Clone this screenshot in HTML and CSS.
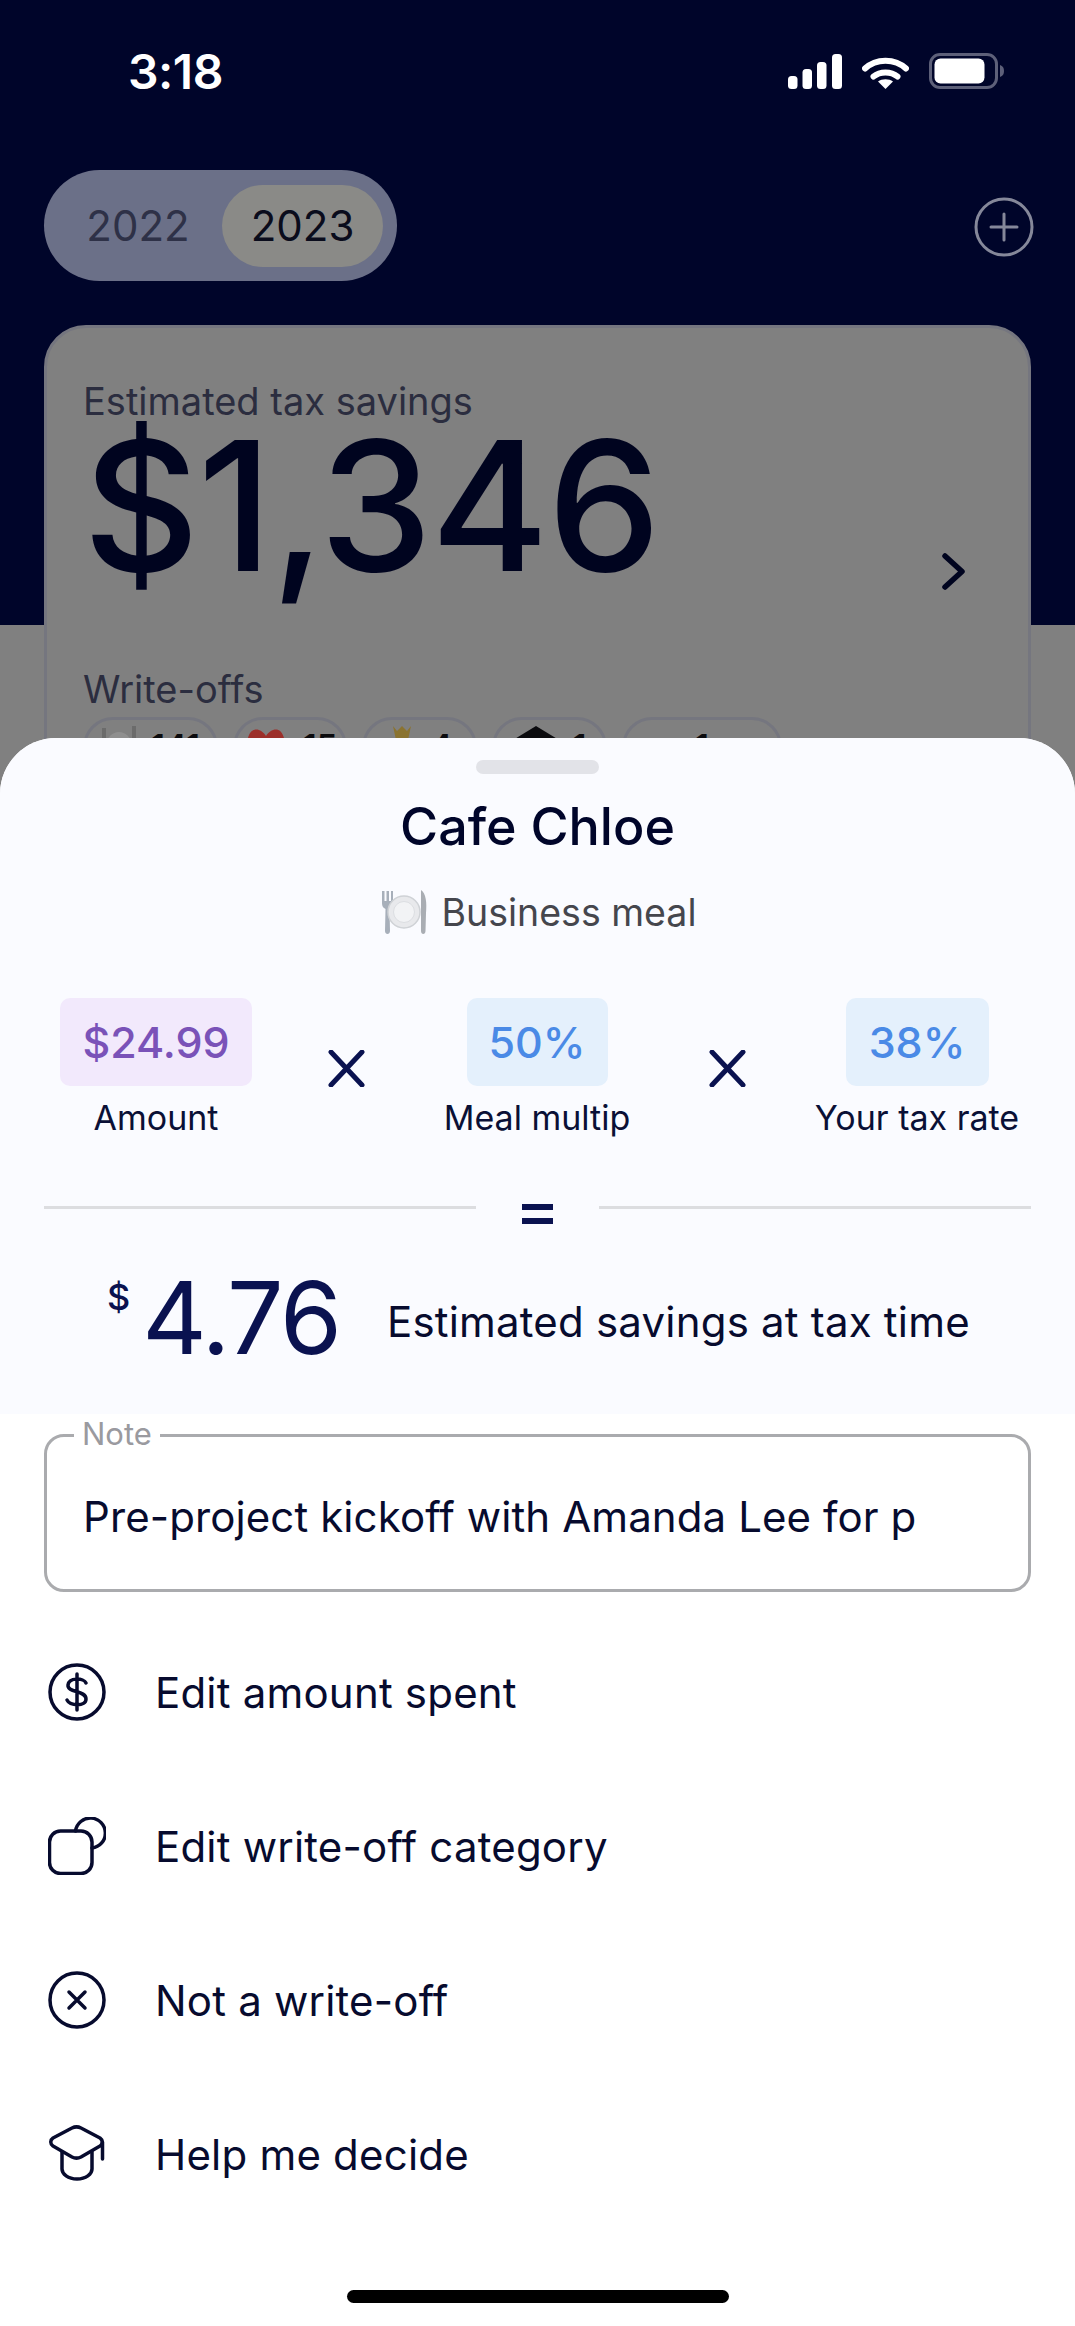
FILE: index.html
```html
<!DOCTYPE html>
<html>
<head>
    <title>Cafe Chloe</title>
    <link rel="stylesheet" href="styles.css">
</head>
<body>
    <div class="screen">
        <div class="back">
            <div class="status">
                <span class="time">3:18</span>
                <div class="status-icons">
                    <svg class="signal" width="54" height="35" viewBox="0 0 54 35">
                        <rect x="0" y="22" width="9.5" height="13" rx="3.5"/>
                        <rect x="14.5" y="15" width="9.5" height="20" rx="3.5"/>
                        <rect x="29" y="8" width="9.5" height="27" rx="3.5"/>
                        <rect x="44" y="0" width="10" height="35" rx="3.5"/>
                    </svg>
                    <svg class="wifi" width="47" height="33" viewBox="0 0 47 33">
                        <path d="M3 12.5 C14 2 33 2 44 12.5" fill="none" stroke="#fff" stroke-width="6" stroke-linecap="round"/>
                        <path d="M11.5 20.5 C18 15 29 15 35.5 20.5" fill="none" stroke="#fff" stroke-width="6" stroke-linecap="round"/>
                        <path d="M23.5 33 L16 25.5 C20 22.5 27 22.5 31 25.5 Z" fill="#fff"/>
                    </svg>
                    <svg class="battery" width="76" height="36" viewBox="0 0 76 36">
                        <rect x="1.5" y="1.5" width="66" height="33" rx="9.5" fill="none" stroke="#5d6079" stroke-width="3"/>
                        <rect x="5.5" y="5.5" width="50" height="25" rx="6" fill="#fff"/>
                        <path d="M71 12 C74 13 75 15 75 18 C75 21 74 23 71 24 Z" fill="#5d6079"/>
                    </svg>
                </div>
            </div>

            <div class="top-row">
                <div class="years">
                    <span class="year year-off">2022</span>
                    <span class="year year-on">2023</span>
                </div>
                <svg class="add" width="60" height="60" viewBox="0 0 60 60">
                    <circle cx="30" cy="30" r="28" fill="none" stroke="#85889a" stroke-width="3"/>
                    <path d="M30 17 V43 M17 30 H43" fill="none" stroke="#85889a" stroke-width="3" stroke-linecap="round"/>
                </svg>
            </div>

            <div class="savings-card">
                <div class="card-label">Estimated tax savings</div>
                <div class="card-main">
                    <div class="big-amount">$1,346</div>
                    <svg class="chevron" width="24" height="37" viewBox="0 0 24 37">
                        <path d="M3 3 L20 18.5 L3 34" fill="none" stroke="#00041f" stroke-width="5.5" stroke-linecap="round" stroke-linejoin="round"/>
                    </svg>
                </div>
                <div class="card-label">Write-offs</div>
                <div class="chips">
                    <div class="chip chip-meal">
                        <svg width="36" height="30" viewBox="0 0 36 30">
                            <path d="M3 2 V30 M33 0 V30" stroke="#6b6b6b" stroke-width="4"/>
                            <circle cx="18" cy="18" r="12" fill="#8f8f8f"/>
                        </svg>
                        <span>141</span>
                    </div>
                    <div class="chip chip-gift">
                        <svg width="46" height="30" viewBox="0 0 46 30">
                            <path d="M5 12 C8 0 18 2 23 10 C28 2 38 0 41 12 Z" fill="#9c2f2a"/>
                            <rect x="1" y="12" width="44" height="18" rx="6" fill="#3a2420"/>
                        </svg>
                        <span>15</span>
                    </div>
                    <div class="chip chip-small">
                        <svg width="30" height="30" viewBox="0 0 30 30">
                            <path d="M6 0 L10 5 L15 0 L20 5 L24 0 L21 14 H9 Z" fill="#8a7330"/>
                            <rect x="12" y="14" width="6" height="16" fill="#2b2418"/>
                        </svg>
                        <span>4</span>
                    </div>
                    <div class="chip chip-small">
                        <svg width="46" height="30" viewBox="0 0 46 30">
                            <path d="M23 0 L46 14 L23 28 L0 14 Z" fill="#0b0b0e"/>
                        </svg>
                        <span>1</span>
                    </div>
                    <div class="chip chip-last"><span>1</span></div>
                </div>
            </div>
        </div>

        <div class="sheet">
            <div class="summary">
                <div class="handle"></div>
                <h1>Cafe Chloe</h1>
                <div class="category">
                    <svg width="50" height="46" viewBox="0 0 50 46">
                        <path d="M3 2 V14 C3 18 5 19 6.5 20 L6 42 C6 46 11 46 11 42 L10.500 20 C12 19 14 18 14 14 V2 L12 2 V12 H10 V2 H7.500 V12 H5.500 V2 Z" fill="#a7afba"/>
                        <circle cx="25" cy="23" r="16" fill="#e8e9ec" stroke="#cfd2d6" stroke-width="1.500"/>
                        <circle cx="25" cy="23" r="10.500" fill="#f2f3f5" stroke="#dcdee2" stroke-width="1"/>
                        <path d="M42 1 C47 4 48 14 47 24 L46.500 42 C46.500 46 42 46 42 42 Z" fill="#a9adb3"/>
                    </svg>
                    <span>Business meal</span>
                </div>

                <div class="factors">
                    <div class="factor">
                        <div class="value value-purple">$24.99</div>
                        <div class="factor-label">Amount</div>
                    </div>
                    <svg class="times" width="37" height="37" viewBox="0 0 37 37">
                        <path d="M3 2 L34 35 M34 2 L3 35" fill="none" stroke="#0a1250" stroke-width="5" stroke-linecap="round"/>
                    </svg>
                    <div class="factor">
                        <div class="value value-blue">50%</div>
                        <div class="factor-label">Meal multip</div>
                    </div>
                    <svg class="times" width="37" height="37" viewBox="0 0 37 37">
                        <path d="M3 2 L34 35 M34 2 L3 35" fill="none" stroke="#0a1250" stroke-width="5" stroke-linecap="round"/>
                    </svg>
                    <div class="factor">
                        <div class="value value-blue value-wide">38%</div>
                        <div class="factor-label">Your tax rate</div>
                    </div>
                </div>

                <div class="equals-row">
                    <div class="rule"></div>
                    <div class="equals"></div>
                    <div class="rule"></div>
                </div>

                <div class="total">
                    <span class="total-dollar">$</span>
                    <span class="total-amount">4.76</span>
                    <span class="total-text">Estimated savings at tax time</span>
                </div>
            </div>

            <div class="lower">
                <div class="note">
                    <label class="note-label">Note</label>
                    <div class="note-text">Pre-project kickoff with Amanda Lee for p</div>
                </div>

                <div class="action">
                    <svg width="58" height="58" viewBox="0 0 58 58">
                        <circle cx="29" cy="29" r="27" class="line"/>
                        <path d="M38 20 C36 15 21 14 20 22 C19 30 38 27 38 36 C38 44 22 43 19 37 M29 11 V47" class="line"/>
                    </svg>
                    <span>Edit amount spent</span>
                </div>
                <div class="action">
                    <svg width="58" height="58" viewBox="0 0 58 58">
                        <rect x="1.500" y="14" width="42.500" height="42.500" rx="11" class="line"/>
                        <path d="M27.500 14 A15 15 0 1 1 44 31" class="line"/>
                    </svg>
                    <span>Edit write-off category</span>
                </div>
                <div class="action">
                    <svg width="58" height="58" viewBox="0 0 58 58">
                        <circle cx="29" cy="29" r="27" class="line"/>
                        <path d="M21 21 L37 37 M37 21 L21 37" class="line"/>
                    </svg>
                    <span>Not a write-off</span>
                </div>
                <div class="action">
                    <svg width="58" height="58" viewBox="0 0 58 58">
                        <path d="M24 3 C27 1.500 30 1.500 33 3 L52 13 C55 15 55 19 52 21 L33 32 C30 33.500 27 33.500 24 32 L5 21 C2 19 2 15 5 13 Z" class="line"/>
                        <path d="M14 27 V44 C14 49 20 54 29 54 C38 54 44 49 44 44 V27 M54.500 17 V34" class="line"/>
                    </svg>
                    <span>Help me decide</span>
                </div>
            </div>

            <div class="home-bar"></div>
        </div>
    </div>
</body>
</html>
```

FILE: styles.css
```css
body {
    margin: 0;
    font-family: "Inter", "Liberation Sans", sans-serif;
}

.screen {
    position: relative;
    width: 1075px;
    height: 2326px;
    overflow: hidden;
    background: #fff;
}

/* dimmed page behind the sheet */
.back {
    height: 800px;
    padding: 0 44px;
    box-sizing: border-box;
    overflow: hidden;
    background: linear-gradient(#00052a 625px, #808080 625px);
}

.status {
    height: 142px;
    display: flex;
    justify-content: space-between;
    align-items: flex-start;
}

.time {
    margin-left: 84px;
    margin-top: 45px;
    font-size: 48px;
    line-height: 54px;
    font-weight: 600;
    letter-spacing: -0.5px;
    color: #fff;
}

.status-icons {
    display: flex;
    align-items: flex-start;
    gap: 20px;
    margin-top: 53px;
    margin-right: 26px;
}

.signal {
    fill: #fff;
    margin-top: 1px;
}

.wifi {
    margin-top: 3px;
}

.top-row {
    height: 183px;
    padding-top: 28px;
    box-sizing: border-box;
    display: flex;
    justify-content: space-between;
    align-items: flex-start;
}

.years {
    width: 353px;
    height: 111px;
    box-sizing: border-box;
    padding: 15px 14px 14px 0;
    border-radius: 56px;
    background: #6b7088;
    display: flex;
}

.year {
    font-size: 42px;
    line-height: 82px;
    text-align: center;
    color: #2e3147;
}

.year-off {
    width: 178px;
    box-sizing: border-box;
    padding-left: 10px;
}

.year-on {
    width: 161px;
    border-radius: 41px;
    background: #8a8a87;
    color: #0a0c1c;
}

.add {
    margin-top: 27px;
    margin-right: -3px;
}

.savings-card {
    height: 500px;
    box-sizing: border-box;
    padding: 51px 36px 0 36px;
    border: 3px solid #75767f;
    border-radius: 42px;
    background: #808080;
}

.card-label {
    font-size: 38px;
    line-height: 44px;
    color: #2b2d3f;
}

.card-main {
    height: 244px;
    display: flex;
    justify-content: space-between;
    align-items: flex-start;
}

.big-amount {
    margin-top: 13px;
    font-size: 180px;
    line-height: 140px;
    font-weight: 500;
    letter-spacing: -1.5px;
    color: #00041f;
}

.chevron {
    margin-top: 130px;
    margin-right: 26px;
}

.chips {
    display: flex;
    gap: 15px;
    margin-top: 6px;
}

.chip {
    height: 70px;
    box-sizing: border-box;
    padding-top: 6px;
    border: 3px solid #75767f;
    border-radius: 30px;
    display: flex;
    justify-content: center;
    align-items: flex-start;
    gap: 14px;
    font-size: 33px;
    font-weight: 600;
    line-height: 40px;
    color: #0b0b0e;
}

.chip-meal { width: 135px; }
.chip-gift { width: 114px; }
.chip-small { width: 115px; }
.chip-last { width: 160px; }

/* the sheet lies over the dimmed page */
.sheet {
    position: absolute;
    top: 738px;
    left: 0;
    width: 1075px;
    height: 1588px;
    border-radius: 56px 56px 0 0;
    overflow: hidden;
    background: #fff;
}

.summary {
    height: 676px;
    box-sizing: border-box;
    padding: 22px 44px 0 44px;
    background: #fafbff;
}

.handle {
    width: 123px;
    height: 14px;
    margin: 0 auto;
    border-radius: 7px;
    background: #e2e3e8;
}

h1 {
    margin: 23px 0 0 0;
    text-align: center;
    font-size: 52px;
    line-height: 60px;
    font-weight: 500;
    color: #00052a;
}

.category {
    margin-top: 31px;
    height: 48px;
    display: flex;
    justify-content: center;
    align-items: center;
    gap: 13px;
    font-size: 37.500px;
    color: #45464d;
}

.factors {
    margin-top: 62px;
    display: grid;
    grid-template-columns: 224px 156px 226px 154px 226px;
    align-items: start;
    justify-items: center;
}

.factor {
    display: flex;
    flex-direction: column;
    align-items: center;
}

.value {
    height: 88px;
    border-radius: 10px;
    font-size: 43px;
    line-height: 88px;
    font-weight: 500;
    text-align: center;
}

.value-purple {
    width: 192px;
    background: #f2e9fc;
    color: #7a52b8;
}

.value-blue {
    width: 141px;
    background: #e4f0fc;
    color: #4a8ae6;
}

.value-wide {
    width: 143px;
}

.factor-label {
    margin-top: 12px;
    font-size: 34px;
    line-height: 40px;
    color: #0a1036;
}

.times {
    margin-top: 52px;
}

.equals-row {
    margin-top: 54px;
    height: 30px;
    display: flex;
    align-items: center;
    gap: 46px;
}

.rule {
    flex: 1;
    height: 3px;
    background: #dcdde0;
}

.equals {
    width: 31px;
    height: 20px;
    box-sizing: border-box;
    border-top: 6px solid #0a1250;
    border-bottom: 6px solid #0a1250;
    margin-top: 14px;
}

.total {
    margin-top: 39px;
    padding-left: 63px;
    display: flex;
    align-items: flex-start;
    color: #0a1250;
}

.total-dollar {
    margin-top: 14px;
    font-size: 36px;
    line-height: 44px;
    font-weight: 500;
}

.total-amount {
    margin-left: 12px;
    font-size: 100px;
    line-height: 114px;
    letter-spacing: -2px;
}

.total-text {
    margin-left: 47px;
    margin-top: 36px;
    font-size: 42px;
    line-height: 50px;
    letter-spacing: 0.2px;
    color: #070b2e;
}

.lower {
    padding: 20px 44px 0 44px;
}

.note {
    position: relative;
    height: 158px;
    box-sizing: border-box;
    border: 3px solid #aaabae;
    border-radius: 20px;
    padding: 55px 36px 0 36px;
}

.note-label {
    position: absolute;
    top: -21px;
    left: 27px;
    padding: 0 8px;
    background: #fff;
    font-size: 31px;
    line-height: 36px;
    color: #9a9a9f;
}

.note-text {
    white-space: nowrap;
    overflow: hidden;
    font-size: 42px;
    line-height: 50px;
    letter-spacing: 0.1px;
    color: #070b2e;
}

.note + .action {
    margin-top: 23px;
}

.action {
    height: 154px;
    display: flex;
    align-items: center;
    gap: 49px;
    padding-left: 4px;
    font-size: 42px;
    letter-spacing: 0.2px;
    color: #070b2e;
}

.line {
    fill: none;
    stroke: #070b2e;
    stroke-width: 3.5;
    stroke-linecap: round;
    stroke-linejoin: round;
}

.home-bar {
    width: 382px;
    height: 13px;
    margin: 59px auto 0 auto;
    border-radius: 7px;
    background: #000;
}
```
